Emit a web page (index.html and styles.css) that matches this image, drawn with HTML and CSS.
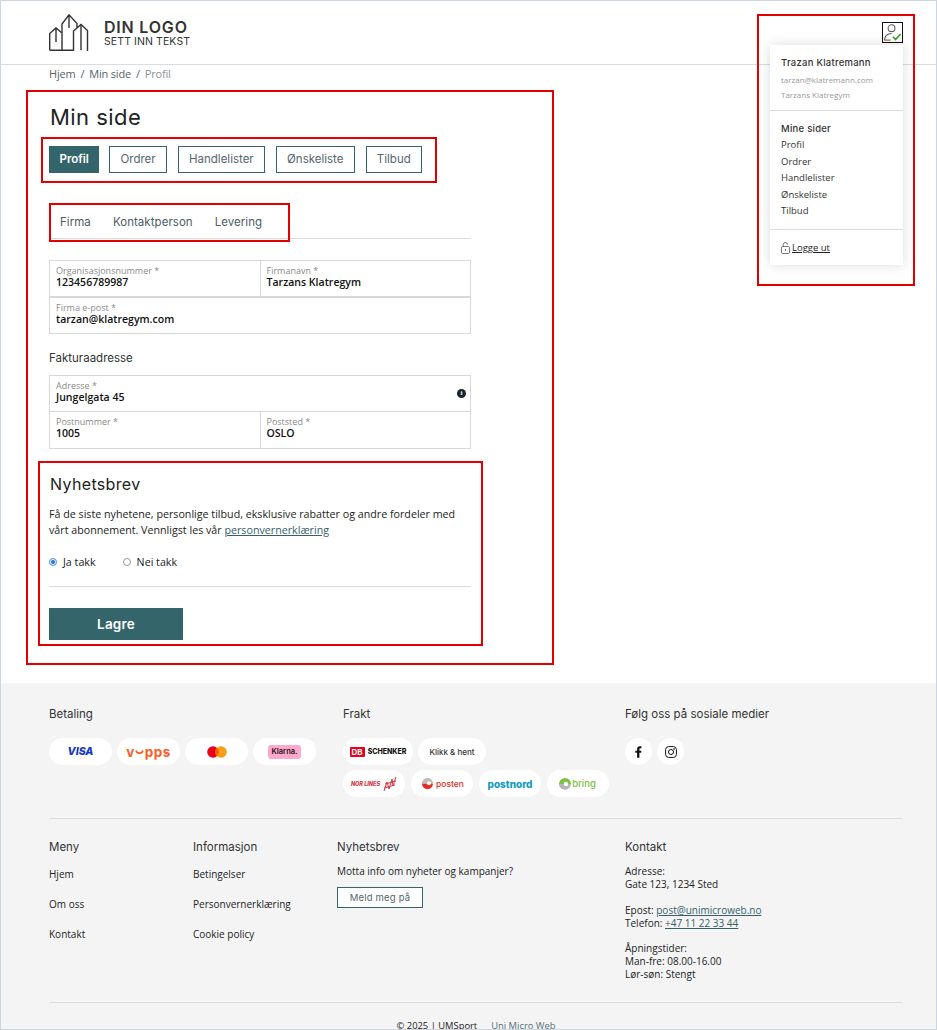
FILE: index.html
```html
<!DOCTYPE html>
<html lang="no">
<head>
<meta charset="utf-8">
<title>Min side</title>
<link rel="stylesheet" href="styles.css">
</head>
<body>
<div class="page">
  <header class="site-header">
    <a class="logo">
      <svg class="logo-mark" viewBox="0 0 40 38" width="40" height="38" fill="none" stroke="#333" stroke-width="1.4">
        <path d="M0.7 36.3V19.5L7 14L13 19M7 14V28M0.7 36.3H13"/>
        <path d="M13 36.3V10L20 0.8L28 9.5V14M13 36.3H24.5V17L32 10.5L38.5 16.5V37M20 1V14"/>
        <path d="M32 10.5V36.3"/>
      </svg>
      <span class="logo-text"><b>DIN LOGO</b><span>SETT INN TEKST</span></span>
    </a>
    <button class="user-btn" aria-label="Min konto">
      <svg viewBox="0 0 20 20" width="19" height="19" fill="none" stroke-width="1.1">
        <circle cx="9" cy="5.5" r="3.6" stroke="#5a5a58"/>
        <path d="M1.5 18C2 13.5 5 11 9 11" stroke="#4d5a60"/>
        <path d="M1.5 18H8" stroke="#8a5a3a"/>
        <path d="M10.5 14.5L13.2 17.5L18.5 11.5" stroke="#3a9a2d" stroke-width="1.7"/>
      </svg>
    </button>
  </header>

  <nav class="crumbs"><a>Hjem</a><i>/</i><a>Min side</a><i>/</i><span>Profil</span></nav>

  <main class="content">
    <h1>Min side</h1>
    <div class="tabs">
      <a class="tab active">Profil</a>
      <a class="tab">Ordrer</a>
      <a class="tab">Handlelister</a>
      <a class="tab">Ønskeliste</a>
      <a class="tab">Tilbud</a>
    </div>
    <div class="subtabs">
      <a>Firma</a><a>Kontaktperson</a><a>Levering</a>
    </div>

    <div class="fields two first">
      <div class="field"><label>Organisasjonsnummer *</label><span>123456789987</span></div>
      <div class="field"><label>Firmanavn *</label><span>Tarzans Klatregym</span></div>
    </div>
    <div class="fields">
      <div class="field"><label>Firma e-post *</label><span>tarzan@klatregym.com</span></div>
    </div>

    <h3 class="addr-title">Fakturaadresse</h3>
    <div class="fields joined">
      <div class="field info-field"><label>Adresse *</label><span>Jungelgata 45</span><i class="info">i</i></div>
    </div>
    <div class="fields two joined-next">
      <div class="field"><label>Postnummer *</label><span>1005</span></div>
      <div class="field"><label>Poststed *</label><span>OSLO</span></div>
    </div>

    <h2 class="news-title">Nyhetsbrev</h2>
    <p class="news-text">Få de siste nyhetene, personlige tilbud, eksklusive rabatter og andre fordeler med vårt abonnement. Vennligst les vår <a>personvernerklæring</a></p>
    <div class="radios">
      <label class="radio"><i class="dot on"></i>Ja takk</label>
      <label class="radio"><i class="dot"></i>Nei takk</label>
    </div>
    <hr class="rule">
    <button class="save">Lagre</button>
  </main>

  <footer class="footer">
    <div class="badges">
      <section class="pay">
        <h4>Betaling</h4>
        <div class="pills">
          <span class="pill w63"><b class="visa">VISA</b></span>
          <span class="pill w63"><b class="vipps">v<svg class="smile" width="9" height="9" viewBox="0 0 9 9" fill="none" stroke="#ff5b24" stroke-width="1.6"><path d="M1 3.5C2 7 7 7 8 3.5"/></svg>pps</b></span>
          <span class="pill w63"><svg width="20" height="12" viewBox="0 0 20 12"><circle cx="6" cy="6" r="5.8" fill="#eb001b"/><circle cx="14" cy="6" r="5.8" fill="#f79e1b"/><path d="M10 1.6a5.8 5.8 0 0 1 0 8.8a5.8 5.8 0 0 1 0-8.8z" fill="#ff5f00"/></svg></span>
          <span class="pill w63"><b class="klarna">Klarna.</b></span>
        </div>
      </section>
      <section class="ship">
        <h4>Frakt</h4>
        <div class="pills">
          <span class="pill w70"><b class="db">DB</b><b class="schenker">SCHENKER</b></span>
          <span class="pill w68"><b class="klikk">Klikk &amp; hent</b></span>
        </div>
        <div class="pills second">
          <span class="pill w62"><b class="norlines">NOR LINES</b><svg width="14" height="16" viewBox="0 0 14 16" fill="none" stroke="#d8343c" stroke-width="1"><path d="M1 15L4 6L6 13L9 3L10 10L13 1M2 8L13 5M1 12L12 9"/></svg></span>
          <span class="pill w62 posten-pill"><svg width="11" height="11" viewBox="0 0 11 11"><path d="M5.5 0A5.5 5.5 0 0 0 0 5H11A5.5 5.5 0 0 0 5.5 0z" fill="#bdbdbd"/><path d="M0 5.6H11A5.5 5.5 0 0 1 0 5.6z" fill="#e32d22"/><circle cx="7" cy="5.3" r="2" fill="#fff"/></svg><b class="posten">posten</b></span>
          <span class="pill w62"><b class="postnord">postnord</b></span>
          <span class="pill w62 bring-pill"><svg width="12" height="12" viewBox="0 0 12 12"><path d="M0 6A6 6 0 0 1 12 6z" fill="#7bc144"/><path d="M0 6H12L11 9A6 6 0 0 1 0 6z" fill="#b5b5b5"/><circle cx="7" cy="6" r="2.2" fill="#fff"/></svg><b class="bring">bring</b></span>
        </div>
      </section>
      <section class="social">
        <h4>Følg oss på sosiale medier</h4>
        <div class="pills">
          <span class="pill round"><svg width="7" height="12" viewBox="0 0 8 13"><path d="M2.4 13V7.3H.4V5h2V3.3C2.4 1.2 3.6 0 5.5 0c.9 0 1.7.1 1.9.1v2.1H6.2c-1 0-1.2.5-1.2 1.2V5h2.3l-.3 2.3H5V13z" fill="#111"/></svg></span>
          <span class="pill round"><svg width="12" height="12" viewBox="0 0 12 12" fill="none" stroke="#111" stroke-width="1"><rect x=".6" y=".6" width="10.8" height="10.8" rx="3"/><circle cx="6" cy="6" r="2.5"/><circle cx="9" cy="3" r=".4"/></svg></span>
        </div>
      </section>
    </div>

    <div class="columns">
      <section class="col">
        <h4>Meny</h4>
        <ul><li>Hjem</li><li>Om oss</li><li>Kontakt</li></ul>
      </section>
      <section class="col">
        <h4>Informasjon</h4>
        <ul><li>Betingelser</li><li>Personvernerklæring</li><li>Cookie policy</li></ul>
      </section>
      <section class="col wide">
        <h4>Nyhetsbrev</h4>
        <p class="motta">Motta info om nyheter og kampanjer?</p>
        <a class="signup">Meld meg på</a>
      </section>
      <section class="col contact">
        <h4>Kontakt</h4>
        <p>Adresse:<br>Gate 123, 1234 Sted</p>
        <p>Epost: <a>post@unimicroweb.no</a><br>Telefon: <a>+47 11 22 33 44</a></p>
        <p>Åpningstider:<br>Man-fre: 08.00-16.00<br>Lør-søn: Stengt</p>
      </section>
    </div>

    <div class="copyright"><span>© 2025 | UMSport</span><a>Uni Micro Web</a></div>
  </footer>

  <aside class="user-menu">
    <div class="um-block">
      <strong>Trazan Klatremann</strong>
      <small>tarzan@klatremann.com</small>
      <small>Tarzans Klatregym</small>
    </div>
    <div class="um-block links">
      <strong>Mine sider</strong>
      <a>Profil</a><a>Ordrer</a><a>Handlelister</a><a>Ønskeliste</a><a>Tilbud</a>
    </div>
    <div class="um-block logout">
      <svg width="9" height="12" viewBox="0 0 9 12" fill="none" stroke="#555" stroke-width=".8"><rect x=".5" y="4.5" width="8" height="7" rx="1.2"/><path d="M2.3 4.5V2.6a2.1 2.1 0 0 1 4.2 0"/><path d="M4.5 7v2"/></svg>
      <a>Logge ut</a>
    </div>
  </aside>

  <div class="mark mark-main"></div>
  <div class="mark mark-tabs"></div>
  <div class="mark mark-subtabs"></div>
  <div class="mark mark-news"></div>
  <div class="mark mark-user"></div>
</div>
</body>
</html>
```

FILE: styles.css
```css
* { box-sizing: border-box; }
html, body { margin: 0; height: 1030px; overflow: hidden; background: #fff; }
body { font-family: "Open Sans", "Liberation Sans", sans-serif; font-size: 10.7px; color: #222; }
.page { position: relative; height: 1030px; overflow: hidden; }
.page::after { content: ""; position: absolute; inset: 0; border: 1px solid #ccd5e0; pointer-events: none; }
h1, h2, h3, h4, strong { font-family: Inter, "Open Sans", sans-serif; }

.site-header { height: 65px; border-bottom: 1px solid #d9dde1; padding: 14px 34px 0 49px; display: flex; justify-content: space-between; align-items: flex-start; }
.logo { display: flex; gap: 15px; align-items: center; height: 38px; }
.logo-text { display: flex; flex-direction: column; font-family: Inter, sans-serif; color: #333; margin-top: 1px; }
.logo-text b { font-size: 16px; line-height: 16px; font-weight: 600; letter-spacing: .8px; }
.logo-text span { font-size: 10.5px; line-height: 13px; letter-spacing: .1px; }
.user-btn { width: 21px; height: 21px; margin-top: 8px; padding: 0; border: 1px solid #111; background: #fff; display: flex; align-items: center; justify-content: center; }

.crumbs { padding: 0 49px; height: 18px; line-height: 17px; font-size: 11px; color: #54636b; display: flex; letter-spacing: -.2px; }
.crumbs i { font-style: normal; margin: 0 5px; }
.crumbs span { color: #87949a; }

.content { padding: 0 0 0 49px; width: 471px; height: 600px; }
h1 { margin: 21px 0 0 1px; font-size: 22px; line-height: 26px; font-weight: 400; letter-spacing: .45px; color: #222; }
.tabs { display: flex; gap: 11px; margin-top: 16px; }
.tab { height: 27px; padding: 0 10.2px; border: 1px solid #34656b; color: #54666c; font-family: Inter, sans-serif; font-size: 11.5px; line-height: 25px; }
.tab.active { padding: 0 9.5px; background: #34656b; color: #fff; font-weight: 600; margin-right: -1px; }
.subtabs { margin-top: 30px; height: 36px; border-bottom: 1px solid #d9dde1; padding: 0 0 0 11px; display: flex; gap: 22px; font-family: Inter, sans-serif; font-size: 11.5px; line-height: 38px; color: #4c5d65; letter-spacing: .05px; }

.fields { display: flex; }
.fields.first { margin-top: 21px; }
.field { position: relative; flex: 1 1 0; height: 37px; border: 1px solid #d8d8d8; padding: 4px 6px 0; display: flex; flex-direction: column; }
.two .field + .field { border-left: 0; }
.field label { font-size: 9px; line-height: 11px; color: #8a8a8a; }
.field span { font-size: 10.55px; line-height: 13px; font-weight: 600; color: #111; }
.info { position: absolute; right: 4px; top: 13px; width: 9px; height: 9px; border-radius: 50%; background: #1a2433; color: #fff; font: 700 7px/9px "Liberation Serif", serif; text-align: center; }

.addr-title { margin: 17px 0 10px; font-size: 11.5px; line-height: 14px; font-weight: 400; color: #333; }
.fields.joined .field { height: 36px; border-bottom: 0; }
.fields.joined-next .field { height: 38px; }

.news-title { margin: 26px 0 0 1px; font-size: 16px; line-height: 19px; font-weight: 400; color: #222; letter-spacing: .35px; }
.news-text { margin: 12px 0 0; line-height: 16px; width: 412px; color: #222; }
.news-text a, .contact a { color: #35606a; text-decoration: underline; }
.radios { display: flex; gap: 27px; margin-top: 16px; height: 16px; align-items: center; }
.radio { display: flex; align-items: center; gap: 6px; }
.dot { width: 8px; height: 8px; border-radius: 50%; border: 1px solid #9a9a9a; background: #fff; }
.dot.on { border-color: #6aa6f0; background: #1a73e8; box-shadow: inset 0 0 0 1px #fff; }
.rule { margin: 16px 0 0; border: 0; border-top: 1px solid #d9dde1; }
.save { display: block; margin-top: 21px; width: 134px; height: 32px; padding: 0; border: 0; background: #34656b; color: #fff; font: 600 13.5px/32px Inter, sans-serif; letter-spacing: .2px; }

.footer { position: absolute; left: 0; right: 0; top: 683px; height: 347px; background: #f4f4f4; padding: 0 34px 0 49px; }
.footer h4 { margin: 0; font-size: 11.5px; line-height: 14px; font-weight: 400; color: #333; }
.badges { display: flex; height: 136px; padding-top: 24px; border-bottom: 1px solid #dcdcdc; }
.pay { width: 294px; }
.ship { width: 282px; }
.pills { display: flex; gap: 5px; margin-top: 17px; }
.ship .pills.second { margin-top: 5px; gap: 6px; }
.pill { height: 27px; background: #fff; border-radius: 14px; display: flex; align-items: center; justify-content: center; gap: 3px; font-family: Inter, sans-serif; white-space: nowrap; }
.w63 { width: 63px; }
.w70 { width: 70px; }
.w68 { width: 68px; }
.w62 { width: 62px; }
.round { width: 27px; border-radius: 50%; }
.visa { color: #1434cb; font-size: 10.5px; font-style: italic; font-weight: 800; }
.vipps { display: flex; align-items: center; color: #ff5b24; font-size: 13.5px; font-weight: 700; letter-spacing: .4px; }
.smile { margin: 0 1px 0 0; }
.klarna { background: #ffa8cd; color: #17120f; font-size: 7.5px; font-weight: 600; border-radius: 3px; padding: 2px 4px; line-height: 10px; }
.db { background: #ec0016; color: #fff; font-size: 8px; line-height: 10px; padding: 0 2px; border-radius: 1px; }
.schenker { color: #111; font-size: 7px; font-weight: 800; }
.klikk { color: #333; font-size: 8px; font-weight: 500; }
.norlines { color: #d8343c; font-size: 5.5px; font-weight: 800; font-style: italic; }
.posten-pill { padding-left: 2px; }
.posten { color: #e32d22; font-size: 8.5px; font-weight: 500; }
.postnord { color: #0d9dbf; font-size: 10px; font-weight: 800; }
.bring-pill { gap: 1px; padding-right: 1px; }
.bring { color: #7bc144; font-size: 9.5px; font-weight: 500; }

.columns { display: flex; padding-top: 21px; height: 184px; border-bottom: 1px solid #dcdcdc; font-size: 10px; color: #222; }
.col { width: 144px; }
.col.wide { width: 288px; }
.col ul { list-style: none; margin: 13px 0 0; padding: 0; }
.col li { height: 30px; line-height: 14px; }
.motta { margin: 10px 0 0; line-height: 14px; }
.signup { display: block; margin-top: 9px; width: 86px; height: 21px; border: 1px solid #34656b; background: #fff; color: #54666c; font-family: Inter, sans-serif; font-size: 9.5px; line-height: 19px; text-align: center; letter-spacing: .2px; }
.contact p { margin: 0 0 12.5px; line-height: 13px; }
.contact h4 { margin-bottom: 11px; }
.copyright { display: flex; justify-content: center; gap: 14px; padding: 16px 0 0; font-size: 9.4px; line-height: 13px; color: #222; }
.copyright a { color: #54707a; }

.user-menu { position: absolute; left: 770px; top: 45px; width: 133px; height: 220px; background: #fff; box-shadow: 0 0 12px rgba(0,0,0,.14); font-size: 9.5px; color: #333; }
.um-block { padding: 12px 11px 0; display: flex; flex-direction: column; }
.um-block strong { font-size: 9.5px; line-height: 12px; font-weight: 500; color: #333; letter-spacing: .25px; }
.um-block small { font-size: 8px; line-height: 15px; color: #9a9a9a; }
.um-block:first-child { height: 66px; border-bottom: 1px solid #dcdcdc; }
.um-block:first-child small:first-of-type { margin-top: 3px; }
.um-block.links { height: 119px; border-bottom: 1px solid #dcdcdc; }
.um-block.links a { line-height: 16.5px; }
.um-block.links strong { margin-bottom: 2px; }
.um-block.logout { flex-direction: row; gap: 2px; align-items: center; padding-top: 11px; }
.logout a { text-decoration: underline; color: #222; }

.mark { position: absolute; border: 2px solid #e50000; pointer-events: none; }
.mark-main { left: 26px; top: 90px; width: 528px; height: 575px; }
.mark-tabs { left: 41px; top: 137px; width: 396px; height: 46px; }
.mark-subtabs { left: 49px; top: 203px; width: 241px; height: 39px; }
.mark-news { left: 38px; top: 461px; width: 445px; height: 185px; }
.mark-user { left: 757px; top: 14px; width: 158px; height: 272px; }
```
